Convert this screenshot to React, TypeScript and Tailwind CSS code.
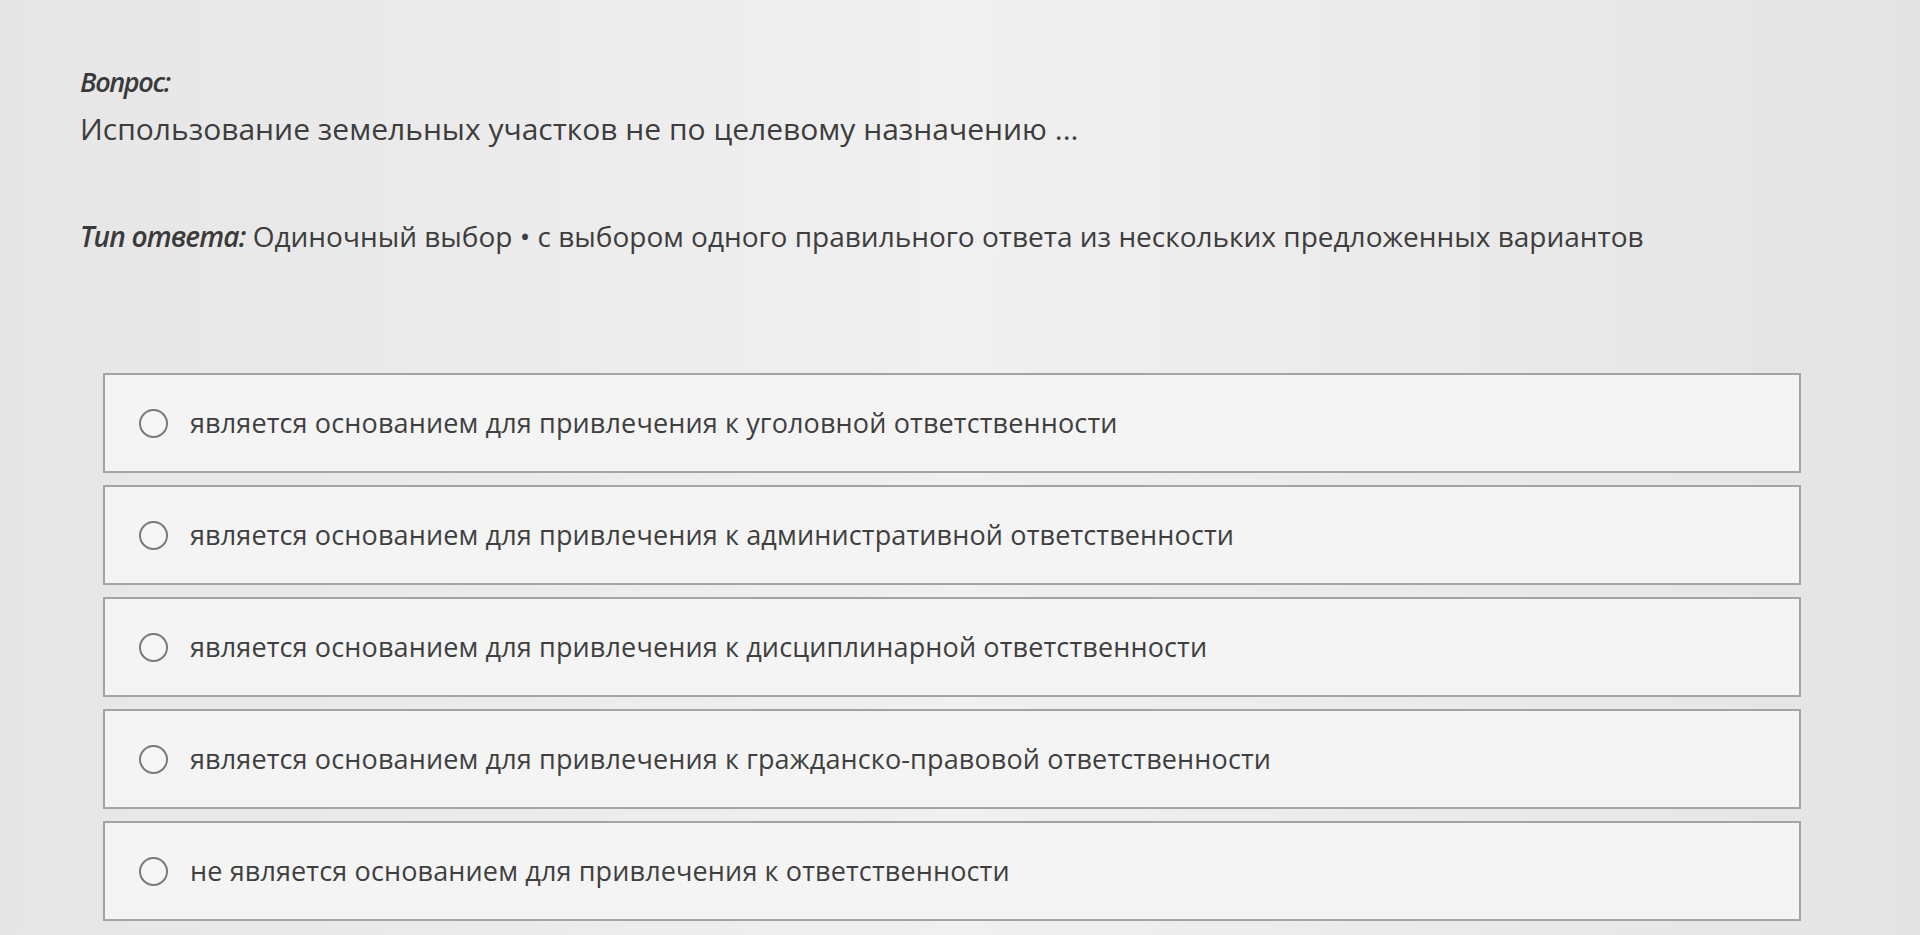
import React from "react";

const options = [
  "является основанием для привлечения к уголовной ответственности",
  "является основанием для привлечения к административной ответственности",
  "является основанием для привлечения к дисциплинарной ответственности",
  "является основанием для привлечения к гражданско-правовой ответственности",
  "не является основанием для привлечения к ответственности",
];

export default function App() {
  return (
    <div
      className="w-[1920px] h-[935px] overflow-hidden bg-gradient-to-r from-[#e6e6e6] via-[#f0f0f0] to-[#e3e5e3] text-[#3a3a3a]"
      style={{ fontFamily: '"Open Sans", "Noto Sans", sans-serif' }}
    >
      <div className="pl-[80px] pt-[66px]">
        <div className="italic font-semibold text-[27px] leading-[32px] tracking-[-0.05em] text-[#3a3a3a]">
          Вопрос:
        </div>
        <div className="mt-[11px] text-[30px] leading-[40px] text-[#3d3d3d]">
          Использование земельных участков не по целевому назначению ...
        </div>
        <div className="mt-[67px] text-[28px] leading-[40px] text-[#3d3d3d]">
          <span className="italic font-semibold tracking-[-0.03em] text-[#3a3a3a]">Тип ответа:</span> Одиночный выбор •
          с выбором одного правильного ответа из нескольких предложенных вариантов
        </div>
      </div>
      <div className="mt-[117px] ml-[103px] w-[1698px] flex flex-col gap-[12px]">
        {options.map((o) => (
          <div
            key={o}
            className="h-[100px] flex items-center bg-[#f4f4f4] border-2 border-[#a3a3a3] pl-[34px]"
          >
            <span className="w-[29px] h-[29px] rounded-full border-2 border-[#7a7a7a] bg-[#f6f6f6] shrink-0" />
            <span className="ml-[22px] text-[27px] tracking-[0.005em] text-[#3f3f3f]">{o}</span>
          </div>
        ))}
      </div>
    </div>
  );
}
